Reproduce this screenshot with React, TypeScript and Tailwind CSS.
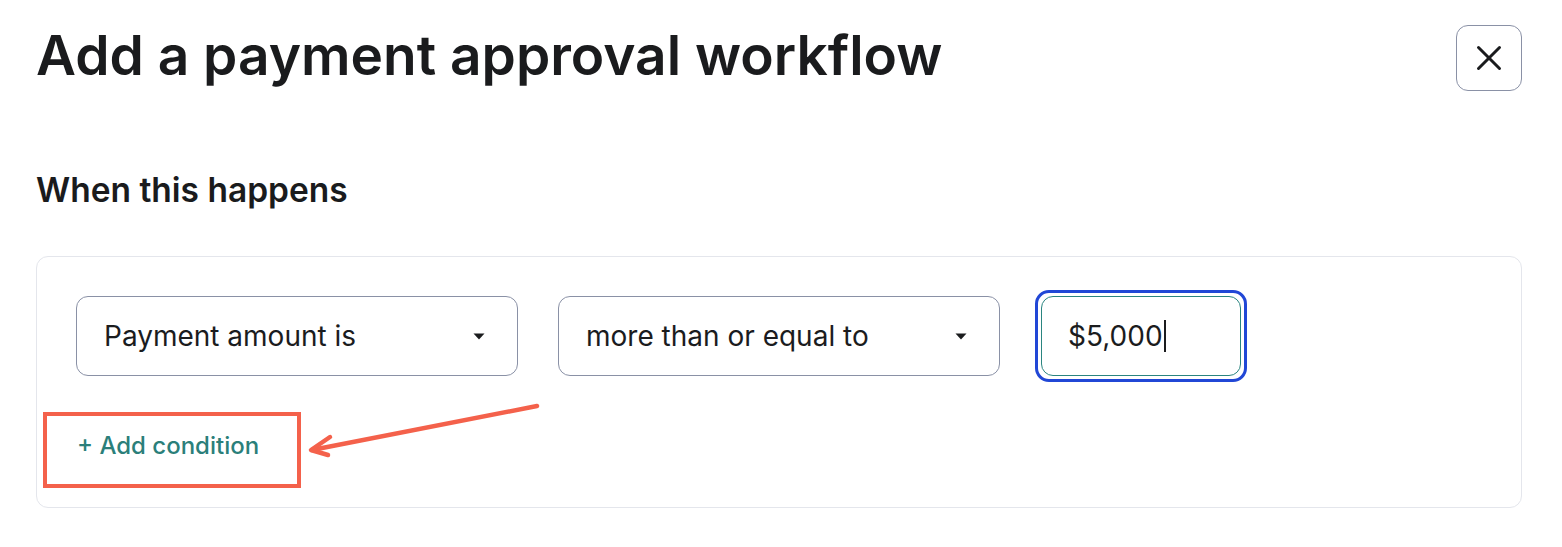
import { X } from 'lucide-react';

function Caret() {
  return (
    <svg width="12" height="7" viewBox="0 0 12 7" className="shrink-0">
      <path d="M0.5 0.5 L11.5 0.5 L6 6.5 Z" fill="#1b1c1e" />
    </svg>
  );
}

function SelectBox({ label }: { label: string }) {
  return (
    <div className="flex h-[80px] w-[442px] items-center justify-between rounded-[12px] border border-[#8a91a6] bg-white pl-[27px] pr-[32px]">
      <span className="text-[28px] leading-[34px] text-[#1b1c1e]">{label}</span>
      <Caret />
    </div>
  );
}

export default function App() {
  return (
    <div
      className="relative h-[547px] w-[1562px] overflow-hidden bg-white"
      style={{ fontFamily: 'Inter, "Noto Sans", sans-serif' }}
    >
      <div className="flex items-start justify-between pl-[36px] pr-[40px] pt-[25px]">
        <h1 className="mt-[-3px] text-[55px] font-semibold leading-[66px] text-[#1a1b1d]">
          Add a payment approval workflow
        </h1>
        <button className="flex h-[66px] w-[66px] items-center justify-center rounded-[12px] border border-[#8a91a6] bg-white">
          <X size={42} strokeWidth={1.7} color="#1a1b1d" />
        </button>
      </div>

      <div className="px-[36px] pt-[79px]">
        <h2 className="text-[33.5px] font-semibold leading-[40px] text-[#1a1b1d]">When this happens</h2>

        <div className="mt-[46px] h-[252px] w-[1486px] rounded-[12px] border border-[#e4e6ec] pl-[39px] pt-[33px]">
          <div className="flex items-center gap-[40px]">
            <SelectBox label="Payment amount is" />
            <SelectBox label="more than or equal to" />
            <div className="ml-[-5px] rounded-[14px] border-[3px] border-[#2147d6] p-[3px]">
              <div className="flex h-[80px] w-[200px] items-center rounded-[12px] border border-[#2a8580] bg-white pl-[26px]">
                <span className="text-[28px] leading-[34px] text-[#1b1c1e]">$5,000</span>
                <span className="ml-[1px] h-[32px] w-[2px] bg-[#1b1c1e]" />
              </div>
            </div>
          </div>

          <div className="mt-[49px] pl-[1px]">
            <span className="text-[24px] font-medium leading-[30px] text-[#2b7f7a]">+ Add condition</span>
          </div>
        </div>
      </div>

      {/* annotation */}
      <div className="pointer-events-none absolute left-[43px] top-[412px] h-[76px] w-[258px] border-[4px] border-[#f4614b]" />
      <svg className="pointer-events-none absolute left-0 top-0" width="1562" height="547">
        <g stroke="#f4614b" strokeWidth="4.5" strokeLinecap="round" strokeLinejoin="round" fill="none">
          <path d="M537 406 L312 450" />
          <path d="M330 437 L311 450 L328 455" />
        </g>
      </svg>
    </div>
  );
}
